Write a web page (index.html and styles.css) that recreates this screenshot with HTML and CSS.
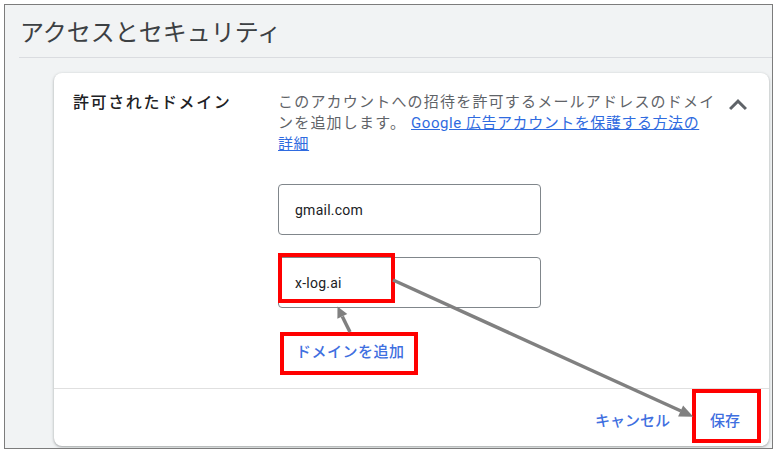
FILE: index.html
```html
<!DOCTYPE html>
<html lang="ja">
<head>
<meta charset="utf-8">
<title>アクセスとセキュリティ</title>
<link rel="stylesheet" href="styles.css">
</head>
<body>
<div class="frame">
  <header class="page-head">
    <h1 class="page-title">アクセスとセキュリティ</h1>
  </header>
  <section class="card">
    <div class="card-body">
      <div class="label">許可されたドメイン</div>
      <div class="main">
        <p class="desc">このアカウントへの招待を許可するメールアドレスのドメイ<br>ンを追加します。 <a class="link" href="#">Google 広告アカウントを保護する方法の<br>詳細</a></p>
        <div class="field"><span class="field-text">gmail.com</span></div>
        <div class="field"><span class="field-text">x-log.ai</span></div>
        <a class="add" href="#">ドメインを追加</a>
      </div>
      <div class="toggle">
        <svg class="chev" viewBox="0 0 24 24" width="36" height="36"><path d="M12 8l-6 6 1.41 1.41L12 10.83l4.59 4.58L18 14z" fill="#5f6368"/></svg>
      </div>
    </div>
    <div class="card-foot">
      <a class="btn" href="#">キャンセル</a>
      <a class="btn" href="#">保存</a>
    </div>
  </section>
</div>
<svg class="notes" width="780" height="453" viewBox="0 0 780 453">
  <g fill="none" stroke="#ff0000" stroke-width="4">
    <rect x="280" y="255" width="113" height="46"/>
    <rect x="282" y="334" width="134" height="39"/>
    <rect x="694" y="391" width="65" height="50"/>
  </g>
  <g stroke="#808080" stroke-width="3.5" stroke-linecap="butt">
    <line x1="350" y1="332" x2="342.3" y2="316.4"/>
    <line x1="393" y1="280" x2="681" y2="411"/>
  </g>
  <g fill="#808080">
    <polygon points="337.5,306.5 347.3,314 337.4,318.8"/>
    <polygon points="693.3,416.7 678.1,416.4 683.1,405.4"/>
  </g>
</svg>
</body>
</html>
```
FILE: styles.css
```css
* { box-sizing: border-box; }
html, body { margin: 0; padding: 0; background: #ffffff; }
body {
  width: 780px;
  height: 453px;
  position: relative;
  overflow: hidden;
  font-family: Roboto, "Noto Sans CJK JP", sans-serif;
}
.frame {
  margin: 4px 0 0 4px;
  width: 769px;
  height: 445px;
  border: 1px solid #7c7c7c;
  background: #f1f3f4;
  overflow: hidden;
  display: flex;
  flex-direction: column;
}
.page-head {
  margin-left: 14px;
  height: 53px;
  border-bottom: 1px solid #dadce0;
  flex: none;
}
.page-title {
  margin: 0;
  padding-left: 1px;
  font-size: 24px;
  font-weight: 400;
  line-height: 52px;
  color: #3c4043;
  font-family: "Noto Sans CJK JP", sans-serif;
}
.card {
  margin: 15px 3px 0 49px;
  height: 373px;
  background: #ffffff;
  border-radius: 8px;
  box-shadow: 0 1px 2px rgba(60, 64, 67, 0.3), 0 1px 3px 1px rgba(60, 64, 67, 0.12);
  display: flex;
  flex-direction: column;
  flex: none;
}
.card-body {
  height: 315px;
  display: flex;
  padding: 18px 0 0 19px;
}
.label {
  width: 205px;
  flex: none;
  font-size: 16px;
  font-weight: 500;
  letter-spacing: 1.6px;
  line-height: 24px;
  color: #202124;
}
.main {
  width: 442px;
  flex: none;
  display: flex;
  flex-direction: column;
  align-items: flex-start;
}
.desc {
  margin: 0;
  font-size: 15px;
  line-height: 21px;
  letter-spacing: 1.2px;
  color: #5f6368;
  padding-top: 1px;
  white-space: nowrap;
}
.link {
  color: #2f6be0;
  text-decoration: underline;
  letter-spacing: 0.55px;
}
.field {
  width: 263px;
  height: 51px;
  border: 1px solid #80868b;
  border-radius: 4px;
  display: flex;
  align-items: center;
  padding: 0 16px;
  margin-top: 22px;
}
.desc + .field { margin-top: 29px; }
.field-text {
  font-size: 14px;
  letter-spacing: 0.25px;
  color: #202124;
}
.add {
  margin: 33px 0 0 18px;
  font-size: 15px;
  font-weight: 500;
  letter-spacing: 0.5px;
  line-height: 20px;
  color: #3f6fe0;
  text-decoration: none;
  font-family: "Noto Sans CJK JP", sans-serif;
}
.toggle {
  margin: -4px 0 0 0;
  width: 36px;
  height: 36px;
  flex: none;
}
.chev { display: block; }
.card-foot {
  border-top: 1px solid #e0e0e0;
  height: 58px;
  display: flex;
  justify-content: flex-end;
  align-items: center;
  gap: 40px;
  padding: 4px 29px 0 0;
}
.btn {
  font-size: 15px;
  font-weight: 500;
  color: #3f6fe0;
  text-decoration: none;
  line-height: 20px;
  font-family: "Noto Sans CJK JP", sans-serif;
}
.notes {
  position: absolute;
  left: 0;
  top: 0;
  pointer-events: none;
}
```
